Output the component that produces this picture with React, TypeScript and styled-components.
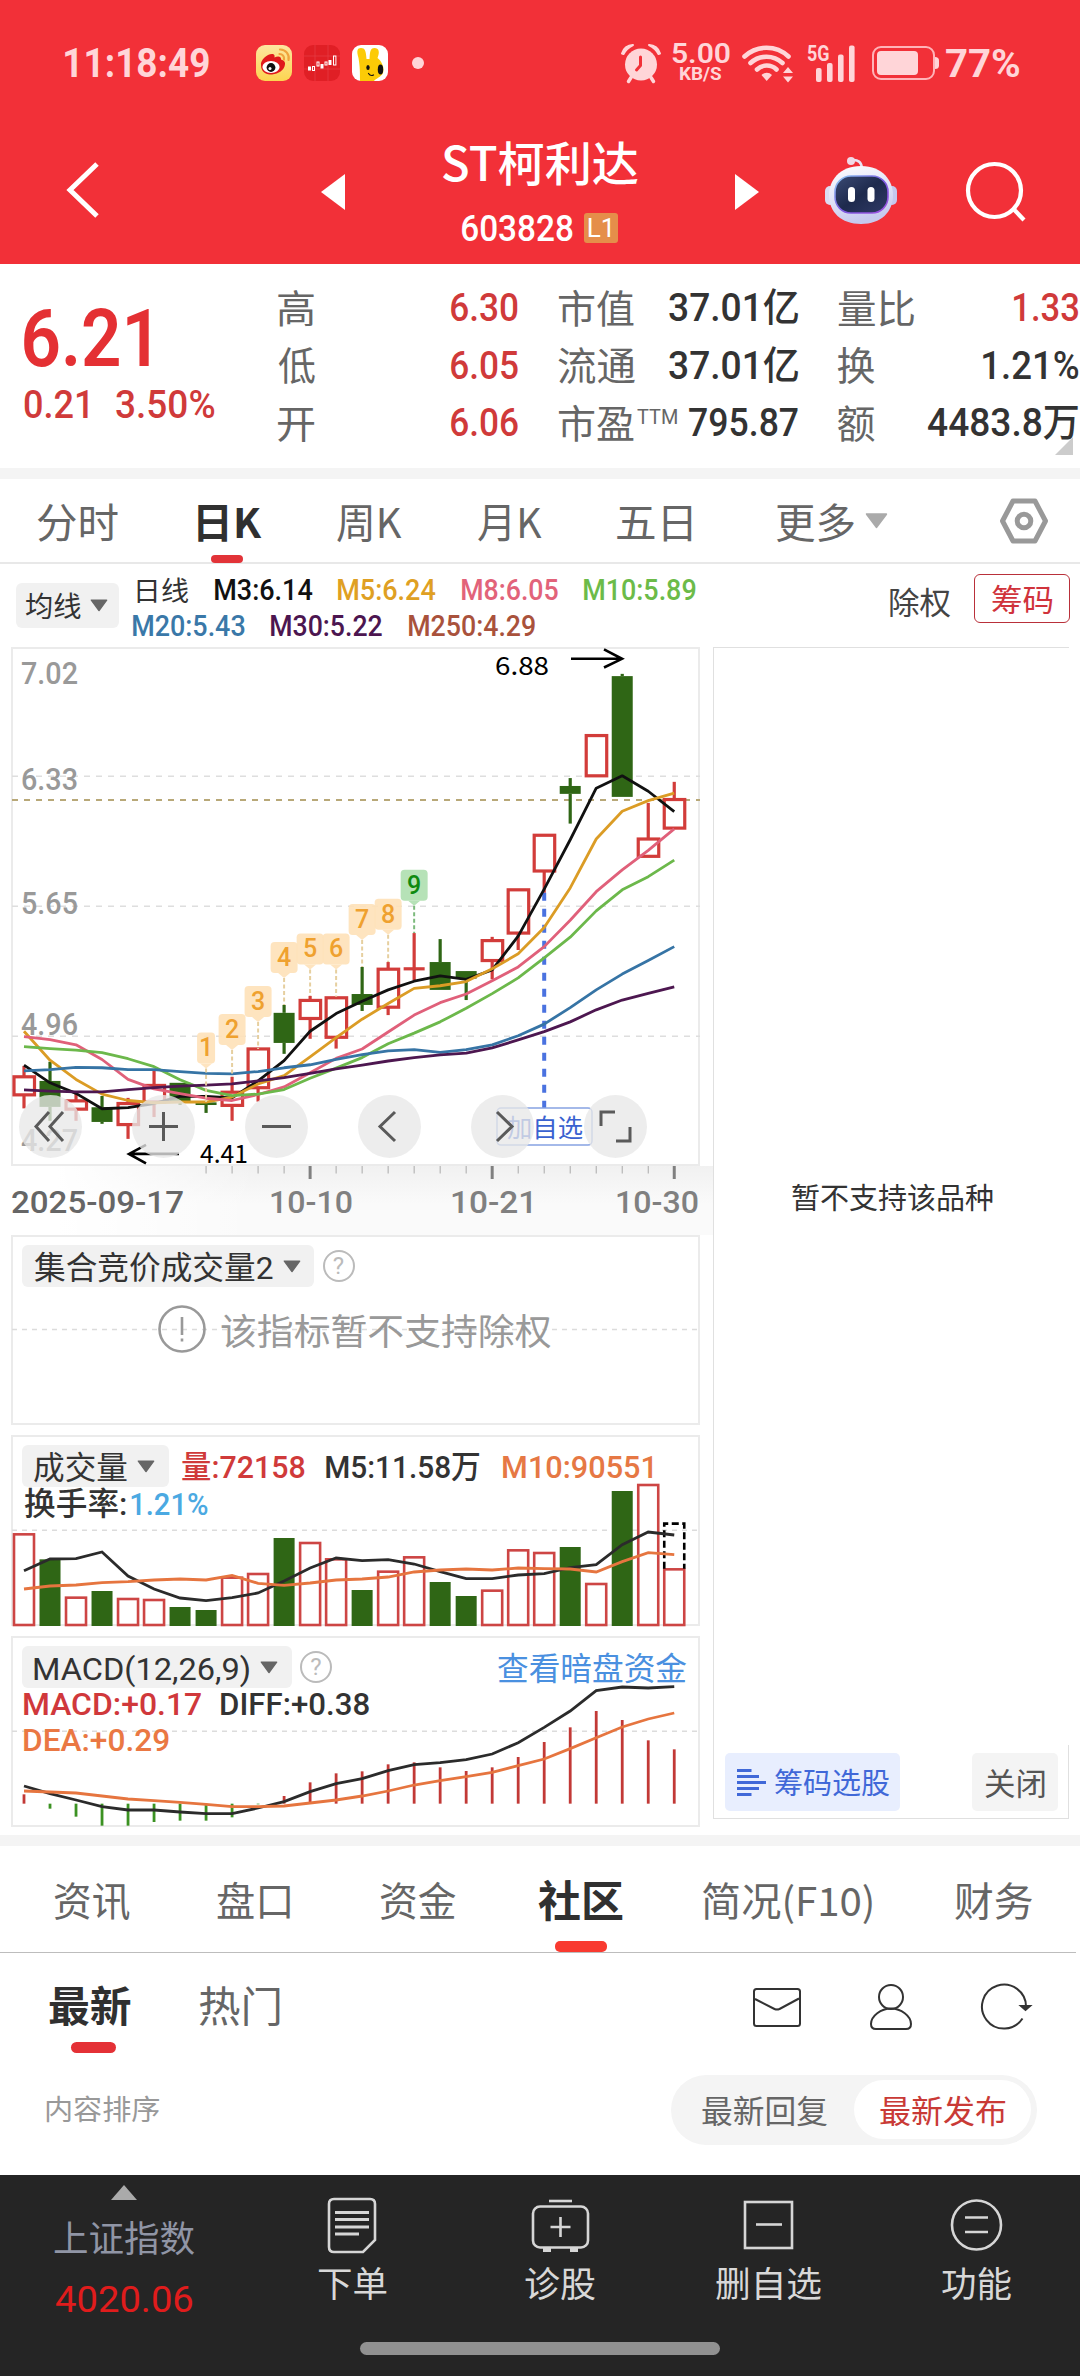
import React, { useLayoutEffect, useRef, useState } from "react";
import styled, { createGlobalStyle } from "styled-components";

const RED = "#d03a3a";
const UP = "#d23c3a";
const DOWN = "#2f6615";
const GREY = "#666";
const INK = "#333";

const Global = createGlobalStyle`
  *, *::before, *::after { box-sizing: border-box; }
  html, body { margin: 0; padding: 0; background: #fff; }
  body { font-family: Roboto, "Noto Sans CJK SC", sans-serif; line-height: 1; }
  svg { display: block; flex: none; overflow: visible; }
`;

/* ---------- text that fills an exact ink width ---------- */

const FitBox = styled.div<{ $w: number; $ml: number }>`
  flex: none;
  width: ${(p) => p.$w}px;
  margin-left: ${(p) => p.$ml}px;
  white-space: nowrap;
  text-align: left;
`;
const FitInk = styled.span`
  display: inline-block;
  transform-origin: 0 50%;
`;

type FitProps = { w: number; ml?: number; className?: string; children: string };

function Fit({ w, ml = 0, className, children }: FitProps) {
  const ref = useRef<HTMLSpanElement>(null);
  const [transform, setTransform] = useState("none");
  useLayoutEffect(() => {
    const el = ref.current;
    const ctx = document.createElement("canvas").getContext("2d");
    if (!el || !ctx) return;
    const cs = getComputedStyle(el);
    ctx.font = `${cs.fontWeight} ${cs.fontSize} ${cs.fontFamily}`;
    const m = ctx.measureText(children);
    const ink = m.actualBoundingBoxLeft + m.actualBoundingBoxRight;
    const k = w / ink;
    setTransform(`translateX(${m.actualBoundingBoxLeft * k}px) scaleX(${k})`);
  }, [w, children]);
  return (
    <FitBox className={className} $w={w} $ml={ml}>
      <FitInk ref={ref} style={{ transform }}>{children}</FitInk>
    </FitBox>
  );
}

/* ---------- shell ---------- */

const Page = styled.div`
  width: 1080px;
  height: 2376px;
  display: flex;
  flex-direction: column;
  overflow: hidden;
  background: #fff;
`;
const Band = styled.div`
  flex: none;
  height: 11px;
  background: #f4f4f4;
`;
const Row = styled.div<{ $ml?: number }>`
  display: flex;
  align-items: center;
  margin-left: ${(p) => p.$ml ?? 0}px;
`;

/* ---------- header ---------- */

const Header = styled.header`
  flex: none;
  height: 264px;
  background: #f23038;
  color: #fff;
`;
const StatusBar = styled.div`
  height: 126px;
  padding: 0 60px 0 65px;
  display: flex;
  align-items: center;
  color: #ffd5d8;
`;
const Clock = styled(Fit)`
  font-size: 41px;
  font-weight: 700;
`;
const AppIcons = styled.div`
  display: flex;
  gap: 12px;
  margin-left: 47px;
`;
const MoreDot = styled.i`
  width: 12px;
  height: 12px;
  margin-left: 24px;
  border-radius: 50%;
  background: #ffd5d8;
`;
const StatusRight = styled.div`
  margin-left: auto;
  display: flex;
  align-items: center;
`;
const Speed = styled.div`
  margin: 0 12px;
  display: flex;
  flex-direction: column;
  align-items: center;
`;
const SpeedValue = styled(Fit)`
  font-size: 28px;
  line-height: 22px;
  font-weight: 600;
`;
const SpeedUnit = styled(Fit)`
  font-size: 19px;
  line-height: 18px;
  font-weight: 700;
`;
const Percent = styled(Fit)`
  padding-top: 2px;
  font-size: 39px;
  font-weight: 700;
`;

const NavBar = styled.nav`
  height: 138px;
  padding: 0 54px 10px 67px;
  display: flex;
  align-items: center;
`;
const TitleStack = styled.div`
  width: 196px;
  height: 110px;
  margin: 6px 97px 0;
  display: flex;
  flex-direction: column;
  align-items: center;
  justify-content: space-between;
`;
const Title = styled(Fit)`
  font-family: "Noto Sans CJK SC", sans-serif;
  font-size: 47px;
  font-weight: 500;
  line-height: 46px;
`;
const CodeRow = styled.div`
  height: 40px;
  display: flex;
  align-items: center;
  gap: 11px;
`;
const Code = styled(Fit)`
  font-size: 37px;
  font-weight: 500;
`;
const Level = styled.div`
  width: 34px;
  height: 30px;
  border-radius: 3px;
  background: #e58e4a;
  font-size: 26px;
  line-height: 30px;
  text-align: center;
`;

function WeiboIcon() {
  return (
    <svg width="36" height="36" viewBox="0 0 36 36">
      <defs>
        <linearGradient id="wb" x1="0" y1="0" x2="0" y2="1">
          <stop offset="0" stopColor="#fde6a0" />
          <stop offset="1" stopColor="#fcd450" />
        </linearGradient>
      </defs>
      <rect width="36" height="36" rx="9" fill="url(#wb)" />
      <path d="M5 20C4 15 12 8 17 9c2 .6 1.500 2.500 1.500 3.500 3-1.600 7-1.500 6.500 2 3.500 1 5 3 3.500 7C26.500 27 20 29.500 14 29.500 9 29.500 5 26 5 20Z" fill="#e0191c" />
      <ellipse cx="15" cy="22" rx="8.600" ry="6" fill="#fff" />
      <circle cx="15" cy="22.500" r="4.400" fill="#111" />
      <circle cx="14" cy="23.500" r="1.500" fill="#fff" />
      <path d="M24 4.500a8.500 8.500 0 0 1 8.500 10.500M23.500 9a4.500 4.500 0 0 1 4.500 5.500" fill="none" stroke="#f0a33c" strokeWidth="2.200" strokeLinecap="round" />
    </svg>
  );
}

function StockIcon() {
  return (
    <svg width="36" height="36" viewBox="0 0 36 36">
      <rect width="36" height="36" rx="9" fill="#e01f25" />
      <path d="M11 0v36M24 0v36M0 11h36M0 24h36" stroke="#e8434a" strokeWidth=".6" />
      <g stroke="#fff" strokeWidth="1">
        <rect x="4.500" y="22" width="2" height="3" fill="#fff" />
        <rect x="8.500" y="21.500" width="2" height="4" fill="none" />
        <rect x="13" y="17" width="2" height="4" fill="none" />
        <rect x="17" y="19.500" width="2" height="3.500" fill="#fff" />
        <rect x="21" y="17" width="2" height="3" fill="none" />
        <rect x="25" y="15.500" width="2" height="4" fill="#fff" />
        <rect x="29.500" y="11" width="2.400" height="9" fill="none" />
      </g>
    </svg>
  );
}

function RabbitIcon() {
  return (
    <svg width="36" height="36" viewBox="0 0 36 36">
      <rect width="36" height="36" rx="9" fill="#fff" />
      <path d="M8 36C8 27 8 22 6.500 13 4.500 6 5 3 9 3s5 3 5.500 11h3C18 7 18 3 22.500 3S28 7 25.500 13c5 4 7 10 5.500 15-2 4-7 5.500-9 8Z" fill="#fccb06" />
      <ellipse cx="16" cy="22.500" rx="1.700" ry="2.600" fill="#111" />
      <ellipse cx="28.500" cy="24.500" rx="2.700" ry="5" fill="#111" />
      <path d="M16.500 28.500q2 3 5 1.500" fill="none" stroke="#111" strokeWidth="1.200" strokeLinecap="round" />
    </svg>
  );
}

function AlarmIcon() {
  return (
    <svg width="38" height="38" viewBox="0 0 38 38" fill="#ffd5d8">
      <circle cx="19" cy="20.500" r="16" />
      <path d="M0 9.500A11 11 0 0 1 11 1C7 3 3.500 6 1.500 10ZM38 9.500A11 11 0 0 0 27 1c4 2 7.500 5 9.500 9Z" stroke="#ffd5d8" strokeWidth="2" strokeLinejoin="round" />
      <path d="M9 33.500l-2.500 4M29 33.500l2.500 4" stroke="#ffd5d8" strokeWidth="3.500" strokeLinecap="round" />
      <path d="M18.500 13v8.500L14.500 26" fill="none" stroke="#f23038" strokeWidth="3" strokeLinecap="round" strokeLinejoin="round" />
    </svg>
  );
}

function WifiIcon() {
  return (
    <svg width="51" height="38" viewBox="0 0 51 38" fill="none" stroke="#ffd5d8" strokeWidth="4.600" strokeLinecap="round">
      <path d="M2.500 12.500a32 32 0 0 1 44 0" />
      <path d="M8.500 19a23.500 23.500 0 0 1 32 0" />
      <path d="M15 25.500a14 14 0 0 1 19.500 0" />
      <path d="M19.500 31a7.500 7.500 0 0 1 10.500 0l-5.300 6Z" fill="#ffd5d8" stroke="none" />
      <path d="M41 29l5-6 5 6ZM41 32.500l5 6 5-6Z" fill="#ffd5d8" stroke="none" />
    </svg>
  );
}

const CellMark = styled.text`
  font-size: 22.500px;
  font-weight: 700;
  fill: #ffd5d8;
`;

function CellIcon() {
  return (
    <svg width="49" height="38" viewBox="0 0 49 38" fill="#ffd5d8">
      <CellMark x="0" y="16.500" textLength="22.500" lengthAdjust="spacingAndGlyphs">5G</CellMark>
      <rect x="9" y="24" width="5.600" height="14" rx="2" />
      <rect x="20" y="19" width="5.600" height="19" rx="2" />
      <rect x="31" y="10.500" width="5.600" height="27.500" rx="2" />
      <rect x="42" y="1.500" width="5.600" height="36.500" rx="2" />
    </svg>
  );
}

function BatteryIcon() {
  return (
    <svg width="67" height="36" viewBox="0 0 67 36" fill="#ffd5d8">
      <rect x="1" y="2" width="61" height="32" rx="8" fill="none" stroke="#ffb3b8" strokeWidth="2" />
      <rect x="5" y="6" width="41" height="24" rx="4" />
      <path d="M63 12q4 0 4 3.500v5q0 3.500-4 3.500Z" />
    </svg>
  );
}

function RobotIcon() {
  return (
    <svg width="72" height="68" viewBox="0 0 72 68">
      <defs>
        <linearGradient id="shell" x1="0" y1="0" x2="0.300" y2="1">
          <stop offset="0" stopColor="#fff" />
          <stop offset=".6" stopColor="#dfe1f6" />
          <stop offset="1" stopColor="#c6c9ee" />
        </linearGradient>
        <linearGradient id="visor" x1="0" y1="0" x2="1" y2="1">
          <stop offset="0" stopColor="#3b4a74" />
          <stop offset=".5" stopColor="#1e2a4d" />
          <stop offset="1" stopColor="#303a66" />
        </linearGradient>
        <linearGradient id="rim" x1="0" y1="0" x2="1" y2="1">
          <stop offset="0" stopColor="#8fd0f4" />
          <stop offset=".5" stopColor="#7a5be0" />
          <stop offset="1" stopColor="#a04fe0" />
        </linearGradient>
      </defs>
      <path d="M27 4q9-1 10 8" fill="none" stroke="#e9e3f4" strokeWidth="2.500" />
      <circle cx="26" cy="5" r="4" fill="#f0d9e6" />
      <rect x="0" y="30" width="10" height="19" rx="5" fill="#dcdcf3" />
      <rect x="62" y="30" width="10" height="19" rx="5" fill="#c5c8ee" />
      <path d="M36 10C58 10 68 25 68 39 68 56 56 68 36 68S4 56 4 39C4 25 14 10 36 10Z" fill="url(#shell)" />
      <rect x="10" y="20" width="53" height="37" rx="16" fill="url(#visor)" stroke="url(#rim)" strokeWidth="1.600" />
      <rect x="23" y="31" width="7" height="15" rx="3.500" fill="#fff" />
      <rect x="42.500" y="31" width="7" height="15" rx="3.500" fill="#fff" />
    </svg>
  );
}

/* ---------- quote ---------- */

const Quote = styled.section`
  flex: none;
  height: 204px;
  padding-left: 24px;
  display: flex;
  position: relative;
`;
const PriceBlock = styled.div`
  width: 254px;
  padding-top: 35px;
`;
const Price = styled(Fit)`
  font-size: 80px;
  font-weight: 600;
  color: #e43033;
`;
const ChangeRow = styled.div`
  display: flex;
  align-items: center;
  height: 40px;
  margin-top: 6px;
`;
const Change = styled(Fit)`
  font-size: 39px;
  font-weight: 500;
  color: ${RED};
`;
const StatColumn = styled.div<{ $mr: number }>`
  width: 240px;
  margin-right: ${(p) => p.$mr}px;
  padding-top: 15px;
`;
const Stat = styled.div`
  height: 57.500px;
  display: flex;
  align-items: center;
`;
const StatLabel = styled(Fit)`
  font-size: 39px;
  padding-top: 5px;
  color: ${GREY};
`;
const Super = styled(Fit)`
  align-self: flex-start;
  padding-top: 13px;
  font-size: 21px;
  color: ${GREY};
`;
const StatSpacer = styled.div`
  flex: 1;
`;
const StatValue = styled(Fit)<{ $up?: boolean }>`
  padding-top: 2px;
  font-size: 39px;
  font-weight: 500;
  color: ${(p) => (p.$up ? RED : INK)};
`;
const Corner = styled.i`
  position: absolute;
  right: 7px;
  top: 173px;
  border-left: 18px solid transparent;
  border-bottom: 18px solid #ccc;
`;

type StatItem = { label: string; lw: number; sup?: boolean; value: string; vw: number; up?: boolean };
const STATS: StatItem[][] = [
  [
    { label: "高", lw: 36, value: "6.30", vw: 67, up: true },
    { label: "低", lw: 37, value: "6.05", vw: 67, up: true },
    { label: "开", lw: 36, value: "6.06", vw: 67, up: true },
  ],
  [
    { label: "市值", lw: 76, value: "37.01亿", vw: 129 },
    { label: "流通", lw: 77, value: "37.01亿", vw: 129 },
    { label: "市盈", lw: 76, sup: true, value: "795.87", vw: 109 },
  ],
  [
    { label: "量比", lw: 76, value: "1.33", vw: 64, up: true },
    { label: "换", lw: 37, value: "1.21%", vw: 95 },
    { label: "额", lw: 37, value: "4483.8万", vw: 150 },
  ],
];

/* ---------- period tabs ---------- */

const PeriodTabs = styled.nav`
  flex: none;
  height: 85px;
  display: flex;
  align-items: center;
  border-bottom: 2px solid #e8e8e8;
  padding-left: 37px;
`;
const PeriodSlot = styled.div<{ $on?: boolean; $ml?: number }>`
  position: relative;
  height: 84px;
  display: flex;
  align-items: center;
  margin-left: ${(p) => p.$ml ?? 0}px;
  &::after {
    content: "";
    display: ${(p) => (p.$on ? "block" : "none")};
    position: absolute;
    left: 50%;
    bottom: 0;
    width: 32px;
    height: 8px;
    margin-left: -19px;
    border-radius: 4px;
    background: #e23338;
  }
`;
const PeriodText = styled(Fit)<{ $on?: boolean }>`
  font-family: "Noto Sans CJK SC", sans-serif;
  font-size: 41px;
  line-height: 41px;
  font-weight: ${(p) => (p.$on ? 700 : 400)};
  color: ${(p) => (p.$on ? "#303030" : GREY)};
`;

function Caret({ w, h, color }: { w: number; h: number; color: string }) {
  return (
    <svg width={w} height={h} viewBox="0 0 20 14">
      <path d="M1.500 1h17L10 12.500Z" fill={color} stroke={color} strokeWidth="1.600" strokeLinejoin="round" />
    </svg>
  );
}

/* ---------- moving-average legend ---------- */

const LegendBar = styled.section`
  flex: none;
  height: 83px;
  display: flex;
  padding-left: 16px;
`;
const MenuButton = styled.button<{ $h: number; $pl: number; $pr: number; $gap: number }>`
  flex: none;
  height: ${(p) => p.$h}px;
  padding: 0 ${(p) => p.$pr}px 0 ${(p) => p.$pl}px;
  display: flex;
  align-items: center;
  gap: ${(p) => p.$gap}px;
  border: 0;
  border-radius: 6px;
  background: #f1f1f1;
  color: ${INK};
  font: inherit;
`;
const AverageSlot = styled.div`
  width: 117px;
  padding-top: 19px;
`;
const MenuText = styled(Fit)<{ $size: number }>`
  padding-top: 4px;
  font-size: ${(p) => p.$size}px;
`;
const LegendLines = styled.div`
  width: 757px;
  padding-top: 9px;
`;
const LegendLine = styled.div`
  height: 36px;
  display: flex;
  align-items: center;
`;
const Avg = styled(Fit)<{ $c: string }>`
  font-size: 29.500px;
  font-weight: 500;
  color: ${(p) => p.$c};
`;
const AvgTitle = styled(Fit)`
  font-size: 27px;
  padding-top: 2px;
  color: ${INK};
`;
const Rights = styled(Fit)`
  font-size: 31px;
  line-height: 80px;
  color: #444;
`;
const ChipToggle = styled.button`
  width: 96px;
  height: 49px;
  margin: 10px 0 0 24px;
  padding: 3px 0 0;
  display: flex;
  align-items: center;
  justify-content: center;
  border: 1.500px solid #b9303a;
  border-radius: 6px;
  background: #fff;
  color: #d0333c;
  font: inherit;
`;
const ChipText = styled(Fit)`
  font-size: 31px;
`;

/* ---------- charts ---------- */

const ChartArea = styled.section`
  flex: none;
  height: 1188px;
  display: flex;
`;
const LeftCharts = styled.div`
  width: 713px;
`;
const Panel = styled.div<{ $h: number; $mt?: number }>`
  position: relative;
  width: 689px;
  height: ${(p) => p.$h}px;
  margin: ${(p) => p.$mt ?? 0}px 0 0 11px;
  border: 2px solid #ebebeb;
`;
const Plot = styled.svg`
  position: absolute;
  left: -1px;
  top: -2px;
`;
const Overlay = styled.div`
  position: relative;
  padding: 8px 8px 8px 9px;
`;
const AxisText = styled.text`
  font-size: 31px;
  font-weight: 500;
  fill: #999;
`;
const MarkText = styled.text`
  font-family: "Noto Sans CJK SC", sans-serif;
  font-size: 25px;
  fill: #000;
`;
const TagText = styled.text<{ $c: string }>`
  font-size: 25px;
  font-weight: 500;
  text-anchor: middle;
  fill: ${(p) => p.$c};
`;
const WatchText = styled.text`
  font-size: 24.500px;
  fill: #3a62d0;
`;

const STEP = 26.01;
const cx = (i: number) => 12 + STEP * i;

const ly = (level: number) => level / 2.658 - 7;

type Candle = [up: 0 | 1, top: number, bottom: number, high: number, low: number];
const CANDLES: Candle[] = [
  [1, 1161, 1209, 1132, 1245], [0, 1172, 1241, 1121, 1278], [1, 1225, 1247, 1200, 1278],
  [0, 1242, 1281, 1212, 1286], [1, 1232, 1288, 1217, 1326], [1, 1184, 1228, 1145, 1268],
  [0, 1177, 1228, 1177, 1236], [0, 1229, 1236, 1226, 1257], [1, 1202, 1237, 1161, 1278],
  [1, 1087, 1190, 1087, 1227], [0, 991, 1071, 970, 1100], [1, 958, 1006, 946, 1060],
  [1, 951, 1056, 951, 1086], [0, 941, 970, 869, 986], [1, 875, 976, 856, 997],
  [1, 874, 874, 779, 905], [0, 856, 930, 795, 930], [0, 880, 900, 880, 957],
  [1, 799, 852, 789, 902], [1, 664, 779, 664, 824], [1, 519, 614, 519, 672],
  [0, 388, 409, 367, 488], [1, 254, 361, 254, 361], [0, 96, 417, 90, 417],
  [1, 529, 575, 433, 575], [1, 424, 500, 377, 500],
];

const AVERAGES: { color: string; levels: number[] }[] = [
  { color: "#111", levels: [1130, 1177, 1205, 1246, 1243, 1232, 1213, 1213, 1217, 1172, 1118, 1040, 993, 960, 930, 907, 893, 902, 877, 787, 662, 531, 394, 361, 402, 456] },
  { color: "#db9c25", levels: [1040, 1117, 1168, 1207, 1224, 1230, 1228, 1228, 1215, 1180, 1158, 1108, 1057, 1008, 966, 926, 919, 908, 874, 834, 764, 659, 529, 455, 427, 407] },
  { color: "#e0607a", levels: [1054, 1062, 1076, 1115, 1168, 1193, 1206, 1218, 1224, 1208, 1188, 1150, 1112, 1087, 1042, 997, 964, 941, 906, 869, 815, 745, 669, 611, 559, 502] },
  { color: "#6cb84b", levels: [1081, 1086, 1090, 1097, 1113, 1134, 1169, 1197, 1211, 1207, 1195, 1165, 1138, 1110, 1073, 1045, 1015, 979, 940, 898, 845, 790, 720, 664, 629, 585] },
  { color: "#3674a5", levels: [1145, 1142, 1136, 1137, 1142, 1142, 1147, 1152, 1153, 1147, 1137, 1129, 1115, 1102, 1092, 1089, 1096, 1089, 1076, 1052, 1021, 977, 930, 888, 852, 815] },
  { color: "#4d1750", levels: [1196, 1199, 1201, 1201, 1195, 1190, 1186, 1183, 1180, 1172, 1163, 1152, 1140, 1130, 1119, 1110, 1103, 1098, 1084, 1063, 1041, 1015, 983, 957, 939, 922] },
];

const TAGS: [index: number, top: number, end: number][] = [
  [7, 1043, 1228], [8, 994, 1160], [9, 920, 1087], [10, 803, 970], [11, 780, 946],
  [12, 780, 948], [13, 702, 869], [14, 688, 856], [15, 611, 779],
];

const line = (ys: number[], f: (v: number) => number) => ys.map((v, i) => `${cx(i)},${f(v)}`).join(" ");

const PRICE_LABELS: [string, number][] = [["7.02", 117], ["6.33", 400], ["5.65", 727], ["4.96", 1051], ["4.27", 1357]];

function PricePlot() {
  return (
    <Plot width="688" height="519" viewBox="0 0 688 519">
      {[362, 708, 1053].map((l) => (
        <path key={l} d={`M0 ${ly(l)}H688`} stroke="#dedede" strokeWidth="1.500" strokeDasharray="6 6" />
      ))}
      <path d={`M0 ${ly(425)}H688`} stroke="#b8a878" strokeWidth="2" strokeDasharray="6 6" />
      {PRICE_LABELS.map(([t, l]) => (
        <AxisText key={t} x="9" y={ly(l)} textLength="57" lengthAdjust="spacingAndGlyphs">{t}</AxisText>
      ))}
      {CANDLES.map(([up, t, b, h, lo], i) => {
        const c = up ? UP : DOWN;
        const x = cx(i);
        return (
          <g key={i} stroke={c} strokeWidth="3.200">
            {h < t && <path d={`M${x} ${ly(h)}V${ly(t)}`} />}
            {lo > b && <path d={`M${x} ${ly(b)}V${ly(lo)}`} />}
            {t === b ? (
              <path d={`M${x - 10.5} ${ly(t)}h21`} />
            ) : up ? (
              <rect x={x - 10} y={ly(t)} width="20.500" height={ly(b) - ly(t)} fill="none" />
            ) : (
              <rect x={x - 10.5} y={ly(t)} width="21" height={ly(b) - ly(t)} fill={c} stroke="none" />
            )}
          </g>
        );
      })}
      <path d={`M${cx(20)} ${ly(672)}V${ly(1245)}`} stroke="#4a72e0" strokeWidth="4" strokeDasharray="8 8" />
      {AVERAGES.map((a) => (
        <polyline key={a.color} points={line(a.levels, ly)} fill="none" stroke={a.color} strokeWidth="2.800" strokeLinejoin="round" />
      ))}
      {TAGS.map(([i, top, end], n) => {
        const x = cx(i);
        const y = ly(top);
        const last = n === 8;
        const half = n === 0 ? 9 : 13.5;
        return (
          <g key={i}>
            <path d={`M${x} ${y + 36}V${ly(end)}`} stroke={last ? "#7dba7d" : "#e6cf9f"} strokeWidth="2" strokeDasharray="4 2.500" />
            <g fill={last ? "#b6e2b7" : "#fee1b8"} fillOpacity={last ? 1 : 0.9}>
              <rect x={x - half} y={y} width={half * 2} height="31" rx="4" />
              <path d={`M${x - 6} ${y + 31}l6 5 6-5Z`} />
            </g>
            <TagText x={x} y={y + 24} $c={last ? "#0f8a10" : "#efa12f"}>{String(n + 1)}</TagText>
          </g>
        );
      })}
      <MarkText x="483" y={ly(92)} textLength="54" lengthAdjust="spacingAndGlyphs">6.88</MarkText>
      <path d={`M559 ${ly(50)}H610M592 ${ly(25)}L610 ${ly(50)}L592 ${ly(73)}`} fill="none" stroke="#000" strokeWidth="2.600" />
      <MarkText x="188" y={ly(1391)} textLength="48" lengthAdjust="spacingAndGlyphs">4.41</MarkText>
      <path d={`M167 ${ly(1366)}H117M134 ${ly(1342)}L117 ${ly(1366)}L134 ${ly(1391)}`} fill="none" stroke="#000" strokeWidth="2.600" />
      <rect x="485" y={ly(1244)} width="95" height="37" rx="4" fill="#fff" stroke="#86a2e2" strokeWidth="1.500" />
      <WatchText x="495" y={ly(1320)} textLength="76" lengthAdjust="spacingAndGlyphs">加自选</WatchText>
    </Plot>
  );
}

const Controls = styled.div`
  position: absolute;
  left: 5.500px;
  top: 446px;
  display: flex;
  gap: 50.200px;
`;
const RoundButton = styled.button`
  width: 63px;
  height: 63px;
  padding: 0;
  display: flex;
  align-items: center;
  justify-content: center;
  border: 0;
  border-radius: 50%;
  background: rgba(232, 232, 232, 0.78);
`;
const CONTROL_PATHS = [
  "M17 4 4 18.500 17 33M31 4 18 18.500 31 33",
  "M4 18.500H33M18.500 4V33",
  "M4 18.500H33",
  "M24 4 9 18.500 24 33",
  "M13 4 28 18.500 13 33",
  "M18 4H4V18M19 33H33V19",
];

const Axis = styled.div`
  position: relative;
  height: 69px;
  padding: 2px 0 0 12px;
  display: flex;
  align-items: center;
  background:
    linear-gradient(to right, #fff 0, #fff 8%, rgba(255, 255, 255, 0) 36%),
    linear-gradient(#f1f1f1, #fafafa 55%);
`;
const Ticks = styled.svg`
  position: absolute;
  left: 12px;
  top: 0;
`;
const DateText = styled(Fit)<{ $c: string }>`
  padding-top: 2px;
  font-size: 31.500px;
  font-weight: 500;
  color: ${(p) => p.$c};
`;

const Help = styled.i<{ $ml: number }>`
  width: 32px;
  height: 32px;
  margin-left: ${(p) => p.$ml}px;
  border: 2px solid #bbb;
  border-radius: 50%;
  font-size: 24px;
  line-height: 28px;
  font-style: normal;
  text-align: center;
  color: #bbb;
`;
const Notice = styled.div`
  display: flex;
  align-items: center;
  height: 46px;
  margin: 19px 0 0 136px;
`;
const NoticeText = styled(Fit)`
  font-size: 36.500px;
  padding-top: 8px;
  color: #999;
`;
const Reading = styled(Fit)<{ $c: string }>`
  padding-top: 1px;
  font-size: 32px;
  font-weight: 500;
  color: ${(p) => p.$c};
`;
const ReadingRow = styled.div<{ $h: number }>`
  height: ${(p) => p.$h}px;
  margin-left: 1.500px;
  display: flex;
  align-items: center;
`;
const DarkLink = styled(Fit)`
  font-size: 32px;
  padding-top: 4px;
  color: #4a90e0;
`;

const vy = (v: number) => v / 3 - 215;
const VOLUMES: [up: 0 | 1, top: number][] = [
  [1, 943], [0, 1018], [1, 1133], [0, 1113], [1, 1137], [1, 1140], [0, 1161], [0, 1170], [1, 1073],
  [1, 1062], [0, 954], [1, 969], [1, 1018], [0, 1110], [1, 1055], [1, 1012], [0, 1086], [0, 1128],
  [1, 1112], [1, 991], [1, 999], [0, 981], [1, 1092], [0, 813], [1, 795], [1, 1048],
];
const VOL5 = [1052, 1017, 1016, 996, 1068, 1107, 1134, 1142, 1133, 1119, 1083, 1044, 1014, 1022, 1019, 1032, 1055, 1076, 1076, 1065, 1061, 1043, 1034, 974, 936, 945];
const VOL10 = [1107, 1098, 1095, 1088, 1085, 1080, 1077, 1080, 1066, 1090, 1096, 1089, 1080, 1077, 1071, 1056, 1050, 1047, 1050, 1044, 1046, 1047, 1056, 1025, 998, 1004];

function VolumePlot() {
  return (
    <Plot width="688" height="191" viewBox="0 0 688 191">
      <path d={`M0 ${vy(931)}H688`} stroke="#dcdcdc" strokeWidth="1.500" strokeDasharray="5 5" />
      {VOLUMES.map(([up, t], i) =>
        up ? (
          <rect key={i} x={cx(i) - 10} y={vy(t)} width="20" height={190 - vy(t)} fill="#fff" stroke="#cd4544" strokeWidth="2.600" />
        ) : (
          <rect key={i} x={cx(i) - 10.5} y={vy(t)} width="21" height={191 - vy(t)} fill={DOWN} />
        )
      )}
      <path d={`M${cx(25) - 10} ${vy(1046)}V${vy(911)}h20V${vy(1046)}`} fill="none" stroke="#000" strokeWidth="2.600" strokeDasharray="7 3.500" />
      <polyline points={line(VOL5, vy)} fill="none" stroke="#2b2b2b" strokeWidth="2.800" />
      <polyline points={line(VOL10, vy)} fill="none" stroke="#e6753f" strokeWidth="2.800" />
    </Plot>
  );
}

const my = (v: number) => v / 3 - 16;
const MACD = [523, 566, 590, 617, 617, 606, 602, 602, 592, 553, 528, 487, 460, 454, 433, 427, 442, 453, 442, 411, 366, 322, 273, 300, 361, 388];
const DIFF = [498, 521, 540, 560, 570, 570, 576, 581, 581, 564, 545, 515, 491, 476, 452, 434, 428, 419, 402, 368, 322, 273, 212, 201, 204, 200];
const DEA = [513, 516, 519, 528, 537, 542, 547, 553, 560, 560, 558, 549, 540, 528, 513, 495, 482, 470, 457, 437, 417, 386, 353, 321, 297, 279];

function MacdPlot() {
  return (
    <Plot width="688" height="191" viewBox="0 0 688 191">
      <path d={`M0 ${my(334)}H688`} stroke="#dcdcdc" strokeWidth="1.500" strokeDasharray="5 5" />
      {MACD.map((v, i) => (
        <path key={i} d={`M${cx(i)} ${my(551)}V${my(v)}`} stroke={v < 551 ? "#c23936" : "#3b9222"} strokeWidth="2.800" />
      ))}
      <polyline points={line(DIFF, my)} fill="none" stroke="#2b2b2b" strokeWidth="2.800" />
      <polyline points={line(DEA, my)} fill="none" stroke="#e6753f" strokeWidth="2.800" />
    </Plot>
  );
}

/* ---------- chip panel ---------- */

const ChipPanel = styled.aside`
  width: 356px;
  height: 1172px;
  display: flex;
  flex-direction: column;
  border: solid #e0e0e0;
  border-width: 1.500px 0 1.500px 1.500px;
`;
const ChipEmpty = styled.div`
  flex: 1;
  display: flex;
  justify-content: center;
  padding: 537px 0 0 2px;
`;
const ChipEmptyText = styled(Fit)`
  font-size: 29px;
  color: ${INK};
`;
const ChipFooter = styled.div`
  height: 73px;
  padding: 8px 10px 7px 11px;
  display: flex;
  justify-content: space-between;
  border-right: 1.500px solid #e0e0e0;
`;
const ChipButton = styled.button<{ $w: number; $bg: string; $c: string }>`
  width: ${(p) => p.$w}px;
  height: 58px;
  padding: 0;
  display: flex;
  align-items: center;
  justify-content: center;
  gap: 9px;
  border: 0;
  border-radius: 5px;
  background: ${(p) => p.$bg};
  color: ${(p) => p.$c};
  font: inherit;
`;
const ChipButtonText = styled(Fit)<{ $size: number }>`
  padding-top: 5px;
  font-size: ${(p) => p.$size}px;
`;

/* ---------- community ---------- */

const SectionTabs = styled.nav`
  flex: none;
  position: relative;
  width: 1076px;
  height: 107px;
  padding: 0 0 1px 54px;
  display: flex;
  align-items: center;
  border-bottom: 1.500px solid #bdbdbd;
`;
const SectionText = styled(Fit)<{ $on?: boolean }>`
  font-family: "Noto Sans CJK SC", sans-serif;
  font-size: ${(p) => (p.$on ? 43 : 39.5)}px;
  font-weight: ${(p) => (p.$on ? 700 : 400)};
  color: ${(p) => (p.$on ? "#303030" : GREY)};
`;
const SectionMark = styled.i`
  position: absolute;
  left: 555px;
  bottom: 0;
  width: 52px;
  height: 11px;
  border-radius: 5px;
  background: #f93a30;
`;
const FeedHead = styled.div`
  flex: none;
  height: 107px;
  padding-left: 48.500px;
  display: flex;
  align-items: center;
`;
const FeedTab = styled.div<{ $on?: boolean }>`
  position: relative;
  height: 107px;
  padding-bottom: 6px;
  display: flex;
  align-items: center;
  &::after {
    content: "";
    display: ${(p) => (p.$on ? "block" : "none")};
    position: absolute;
    left: 22px;
    top: 89px;
    width: 45px;
    height: 11px;
    border-radius: 5.500px;
    background: #e43136;
  }
`;
const FeedText = styled(Fit)<{ $on?: boolean }>`
  font-family: "Noto Sans CJK SC", sans-serif;
  font-size: 42px;
  font-weight: ${(p) => (p.$on ? 700 : 400)};
  color: ${(p) => (p.$on ? "#303030" : GREY)};
`;
const FeedIcons = styled.div`
  margin: 0 50px 0 auto;
  display: flex;
  align-items: center;
`;
const SortRow = styled.div`
  flex: none;
  height: 115px;
  padding: 15px 43px 0 46px;
  display: flex;
  align-items: flex-start;
  justify-content: space-between;
`;
const SortLabel = styled(Fit)`
  font-size: 28.500px;
  line-height: 71px;
  color: #999;
`;
const Pill = styled.div`
  width: 366px;
  height: 70px;
  padding: 5px 6px 6px 31px;
  display: flex;
  align-items: center;
  justify-content: space-between;
  border-radius: 35px;
  background: #f4f4f4;
`;
const PillOn = styled.div`
  width: 177px;
  height: 59px;
  display: flex;
  align-items: center;
  justify-content: center;
  border-radius: 30px;
  background: #fff;
`;
const PillText = styled(Fit)<{ $on?: boolean }>`
  padding-top: 4px;
  font-size: 32px;
  color: ${(p) => (p.$on ? "#c93a36" : GREY)};
`;

/* ---------- bottom bar ---------- */

const BottomBar = styled.footer`
  flex: none;
  height: 201px;
  background: #252525;
`;
const BottomItems = styled.div`
  height: 167px;
  display: flex;
`;
const IndexCell = styled.div`
  width: 248px;
  padding-top: 10px;
  display: flex;
  flex-direction: column;
  align-items: center;
`;
const IndexName = styled(Fit)`
  margin-top: 22px;
  font-size: 36px;
  color: #9095a5;
`;
const IndexValue = styled(Fit)`
  margin-top: 23px;
  font-size: 37px;
  color: #e01c1c;
`;
const Action = styled.button`
  width: 208px;
  padding: 21px 0 0;
  display: flex;
  flex-direction: column;
  align-items: center;
  border: 0;
  background: none;
  font: inherit;
`;
const ActionText = styled(Fit)`
  margin-top: 14px;
  font-size: 35px;
  color: #d8d8d8;
`;
const HomeBar = styled.i`
  display: block;
  width: 360px;
  height: 12.500px;
  margin: 0 auto;
  border-radius: 7px;
  background: #919191;
`;

const bottomIcons: { label: string; w: number; art: React.ReactNode }[] = [
  {
    label: "下单",
    w: 69,
    art: (
      <>
        <path d="M11 3H47q5 0 5 5V44L40 56H11q-5 0-5-5V8q0-5 5-5Z" />
        <path d="M12 16.500H46M12 23.500H46M12 31H46M12 38H36" strokeWidth="3" />
      </>
    ),
  },
  {
    label: "诊股",
    w: 70,
    art: (
      <>
        <path d="M18 5h23" />
        <rect x="2" y="10.500" width="55" height="41" rx="7" />
        <path d="M12 54h8M39 54h8" strokeWidth="4" />
        <path d="M29.500 21v20M19.500 31h20" />
      </>
    ),
  },
  {
    label: "删自选",
    w: 105,
    art: (
      <>
        <rect x="6" y="6" width="47" height="46" />
        <path d="M17 28.500h26" />
      </>
    ),
  },
  {
    label: "功能",
    w: 69,
    art: (
      <>
        <circle cx="29.500" cy="29" r="24.500" />
        <path d="M18 21.500h23M18 36h23" />
      </>
    ),
  },
];

const LEGEND_TOP: [string, number, number, string][] = [
  ["M3:6.14", 98, 27, "#111"],
  ["M5:6.24", 98, 25, "#dfa023"],
  ["M8:6.05", 96, 25.5, "#e2637a"],
  ["M10:5.89", 112, 26.5, "#6cbb49"],
];
const LEGEND_LOW: [string, number, number, string][] = [
  ["M20:5.43", 112, 0, "#3a78a8"],
  ["M30:5.22", 111, 26, "#4c1650"],
  ["M250:4.29", 126.5, 27, "#a9523c"],
];

export default function App() {
  return (
    <Page>
      <Global />
      <Header>
        <StatusBar>
          <Clock w={144}>11:18:49</Clock>
          <AppIcons>
            <WeiboIcon />
            <StockIcon />
            <RabbitIcon />
          </AppIcons>
          <MoreDot />
          <StatusRight>
            <AlarmIcon />
            <Speed>
              <SpeedValue w={58}>5.00</SpeedValue>
              <SpeedUnit w={42}>KB/S</SpeedUnit>
            </Speed>
            <WifiIcon />
            <Row $ml={14}><CellIcon /></Row>
            <Row $ml={16}><BatteryIcon /></Row>
            <Percent w={74} ml={7}>77%</Percent>
          </StatusRight>
        </StatusBar>
        <NavBar>
          <svg width="32" height="58" viewBox="0 0 32 58">
            <path d="M30 3 3 29 30 55" fill="none" stroke="#fff" strokeWidth="5" />
          </svg>
          <Row $ml={222}>
            <svg width="24" height="40" viewBox="0 0 24 40"><path d="M24 4v36L0 22Z" fill="#fff" /></svg>
          </Row>
          <TitleStack>
            <Title w={195}>ST柯利达</Title>
            <CodeRow>
              <Code w={111}>603828</Code>
              <Level>L1</Level>
            </CodeRow>
          </TitleStack>
          <svg width="24" height="40" viewBox="0 0 24 40"><path d="M0 4v36L24 22Z" fill="#fff" /></svg>
          <Row $ml={66}><RobotIcon /></Row>
          <Row $ml={69}>
            <svg width="60" height="60" viewBox="0 0 60 60" fill="none" stroke="#fff" strokeWidth="4.200">
              <circle cx="28.500" cy="30.500" r="26.500" />
              <path d="M47.500 49 58 60" />
            </svg>
          </Row>
        </NavBar>
      </Header>

      <Quote>
        <PriceBlock>
          <Price w={125}>6.21</Price>
          <ChangeRow>
            <Change w={64}>0.21</Change>
            <Change w={98} ml={28}>3.50%</Change>
          </ChangeRow>
        </PriceBlock>
        {STATS.map((col, c) => (
          <StatColumn key={c} $mr={c === 2 ? 0 : c === 0 ? 40 : 39.500}>
            {col.map((s) => (
              <Stat key={s.label}>
                <StatLabel w={s.lw}>{s.label}</StatLabel>
                {s.sup && <Super w={40} ml={3}>TTM</Super>}
                <StatSpacer />
                <StatValue w={s.vw} $up={s.up}>{s.value}</StatValue>
              </Stat>
            ))}
          </StatColumn>
        ))}
        <Corner />
      </Quote>
      <Band />

      <PeriodTabs>
        <PeriodSlot><PeriodText w={81}>分时</PeriodText></PeriodSlot>
        <PeriodSlot $ml={80} $on><PeriodText w={64} $on>日K</PeriodText></PeriodSlot>
        <PeriodSlot $ml={75}><PeriodText w={65}>周K</PeriodText></PeriodSlot>
        <PeriodSlot $ml={76}><PeriodText w={64}>月K</PeriodText></PeriodSlot>
        <PeriodSlot $ml={75}><PeriodText w={75}>五日</PeriodText></PeriodSlot>
        <PeriodSlot $ml={84}><PeriodText w={78}>更多</PeriodText></PeriodSlot>
        <Row $ml={11}><Caret w={23} h={18} color="#aaa" /></Row>
        <Row $ml={112}>
          <svg width="48" height="46" viewBox="0 0 48 46" fill="none" stroke="#999" strokeWidth="5" strokeLinejoin="round">
            <path d="M13 3H35L45.500 23 35 43H13L2.500 23Z" />
            <circle cx="24" cy="23" r="6.800" />
          </svg>
        </Row>
      </PeriodTabs>

      <LegendBar>
        <AverageSlot>
          <MenuButton $h={45} $pl={9.5} $pr={11} $gap={10}>
            <MenuText w={54.5} $size={28}>均线</MenuText>
            <Caret w={18} h={13} color="#666" />
          </MenuButton>
        </AverageSlot>
        <LegendLines>
          <LegendLine>
            <AvgTitle w={51} ml={4}>日线</AvgTitle>
            {LEGEND_TOP.map(([t, w, ml, c]) => <Avg key={t} w={w} ml={ml} $c={c}>{t}</Avg>)}
          </LegendLine>
          <LegendLine>
            {LEGEND_LOW.map(([t, w, ml, c]) => <Avg key={t} w={w} ml={ml} $c={c}>{t}</Avg>)}
          </LegendLine>
        </LegendLines>
        <Rights w={60}>除权</Rights>
        <ChipToggle><ChipText w={61}>筹码</ChipText></ChipToggle>
      </LegendBar>

      <ChartArea>
        <LeftCharts>
          <Panel $h={519}>
            <PricePlot />
            <Controls>
              {CONTROL_PATHS.map((d) => (
                <RoundButton key={d}>
                  <svg width="37" height="37" viewBox="0 0 37 37" fill="none" stroke="#5a5a5a" strokeWidth="3">
                    <path d={d} />
                  </svg>
                </RoundButton>
              ))}
            </Controls>
          </Panel>
          <Axis>
            <Ticks width="688" height="14" viewBox="0 0 688 14">
              {CANDLES.map((_, i) => {
                if (i < 7) return null;
                const big = i === 11 || i === 18 || i === 25;
                return <path key={i} d={`M${cx(i)} 0V${big ? 13 : 7.5}`} stroke={big ? "#808080" : "#aaa"} strokeWidth={big ? 3 : 1} />;
              })}
            </Ticks>
            <DateText w={171} $c="#666">2025-09-17</DateText>
            <DateText w={81} ml={88} $c="#808080">10-10</DateText>
            <DateText w={79} ml={100} $c="#808080">10-21</DateText>
            <DateText w={81} ml={86} $c="#808080">10-30</DateText>
          </Axis>

          <Panel $h={190}>
            <Plot width="688" height="190" viewBox="0 0 688 190">
              <path d="M0 94.500H688" stroke="#dcdcdc" strokeWidth="1.500" strokeDasharray="5 5" />
            </Plot>
            <Overlay>
              <Row>
                <MenuButton $h={42} $pl={12} $pr={13} $gap={10}>
                  <MenuText w={238.5} $size={32}>集合竞价成交量2</MenuText>
                  <Caret w={18} h={13} color="#666" />
                </MenuButton>
                <Help $ml={9}>?</Help>
              </Row>
              <Notice>
                <svg width="48" height="48" viewBox="0 0 48 48" fill="none" stroke="#999" strokeWidth="2.600">
                  <circle cx="24" cy="24" r="22.500" />
                  <path d="M24 12v18M24 33.500v3" />
                </svg>
                <NoticeText w={330} ml={15}>该指标暂不支持除权</NoticeText>
              </Notice>
            </Overlay>
          </Panel>

          <Panel $h={191} $mt={10}>
            <VolumePlot />
            <Overlay>
              <Row>
                <MenuButton $h={42} $pl={12} $pr={14} $gap={10}>
                  <MenuText w={93} $size={32}>成交量</MenuText>
                  <Caret w={18} h={13} color="#666" />
                </MenuButton>
                <Reading w={122.5} ml={12.5} $c={RED}>量:72158</Reading>
                <Reading w={154} ml={22} $c={INK}>M5:11.58万</Reading>
                <Reading w={149} ml={23} $c="#e67844">M10:90551</Reading>
              </Row>
              <ReadingRow $h={32}>
                <Reading w={102} $c={INK}>换手率:</Reading>
                <Reading w={77} ml={5} $c="#4ba9e2">1.21%</Reading>
              </ReadingRow>
            </Overlay>
          </Panel>

          <Panel $h={191} $mt={10}>
            <MacdPlot />
            <Overlay>
              <Row>
                <MenuButton $h={42} $pl={12} $pr={14} $gap={11}>
                  <MenuText w={215} $size={32}>MACD(12,26,9)</MenuText>
                  <Caret w={18} h={13} color="#666" />
                </MenuButton>
                <Help $ml={8}>?</Help>
                <DarkLink w={189} ml={166}>查看暗盘资金</DarkLink>
              </Row>
              <ReadingRow $h={31}>
                <Reading w={177} $c="#d0383b">MACD:+0.17</Reading>
                <Reading w={148} ml={20} $c={INK}>DIFF:+0.38</Reading>
              </ReadingRow>
              <ReadingRow $h={41}>
                <Reading w={145} $c="#ea7843">DEA:+0.29</Reading>
              </ReadingRow>
            </Overlay>
          </Panel>
        </LeftCharts>

        <ChipPanel>
          <ChipEmpty><ChipEmptyText w={201}>暂不支持该品种</ChipEmptyText></ChipEmpty>
          <ChipFooter>
            <ChipButton $w={175} $bg="#e8eefe" $c="#4068d8">
              <svg width="29" height="29" viewBox="0 0 29 29" stroke="#4068d8" strokeWidth="3.200">
                <path d="M0 2.500H14.500M0 8.500H22M0 14.500H29M0 20.500H22M0 26.500H14.500" />
              </svg>
              <ChipButtonText w={114} $size={29}>筹码选股</ChipButtonText>
            </ChipButton>
            <ChipButton $w={86} $bg="#f4f4f4" $c="#555">
              <ChipButtonText w={60} $size={31}>关闭</ChipButtonText>
            </ChipButton>
          </ChipFooter>
        </ChipPanel>
      </ChartArea>
      <Band />

      <SectionTabs>
        <SectionText w={76}>资讯</SectionText>
        <SectionText w={73} ml={87}>盘口</SectionText>
        <SectionText w={76} ml={90}>资金</SectionText>
        <SectionText w={85} ml={82} $on>社区</SectionText>
        <SectionText w={170} ml={79}>简况(F10)</SectionText>
        <SectionText w={77} ml={83}>财务</SectionText>
        <SectionMark />
      </SectionTabs>
      <FeedHead>
        <FeedTab $on><FeedText w={81.5} $on>最新</FeedText></FeedTab>
        <FeedTab><FeedText w={81} ml={69}>热门</FeedText></FeedTab>
        <FeedIcons>
          <svg width="48" height="40" viewBox="0 0 48 40" fill="none" stroke="#333" strokeWidth="2" strokeLinejoin="round">
            <rect x="1" y="2" width="46" height="37" rx="2.500" />
            <path d="M2 12 21.500 22q2.500 1.200 5 0L46 11.500" />
          </svg>
          <Row $ml={69}>
            <svg width="42" height="46" viewBox="0 0 42 46" fill="none" stroke="#333" strokeWidth="2">
              <circle cx="21" cy="13" r="12" />
              <path d="M21 24.500C31 24.500 41 32 41 40q0 5-5 5H6q-5 0-5-5C1 32 11 24.500 21 24.500Z" />
            </svg>
          </Row>
          <Row $ml={69}>
            <svg width="49" height="46" viewBox="0 0 49 46" fill="none" stroke="#333" strokeWidth="2">
              <path d="M41.500 34.500A22 22 0 1 1 45 23" />
              <path d="M40 22h9l-4.500 4Z" fill="#333" />
            </svg>
          </Row>
        </FeedIcons>
      </FeedHead>
      <SortRow>
        <SortLabel w={114}>内容排序</SortLabel>
        <Pill>
          <PillText w={125}>最新回复</PillText>
          <PillOn><PillText w={126} $on>最新发布</PillText></PillOn>
        </Pill>
      </SortRow>

      <BottomBar>
        <BottomItems>
          <IndexCell>
            <svg width="26" height="15" viewBox="0 0 26 15"><path d="M0 15 13 0 26 15Z" fill="#aaa" /></svg>
            <IndexName w={140}>上证指数</IndexName>
            <IndexValue w={138}>4020.06</IndexValue>
          </IndexCell>
          {bottomIcons.map((b) => (
            <Action key={b.label}>
              <svg width="59" height="58" viewBox="0 0 59 58" fill="none" stroke="#d6d6d6" strokeWidth="2.600">{b.art}</svg>
              <ActionText w={b.w}>{b.label}</ActionText>
            </Action>
          ))}
        </BottomItems>
        <HomeBar />
      </BottomBar>
    </Page>
  );
}
